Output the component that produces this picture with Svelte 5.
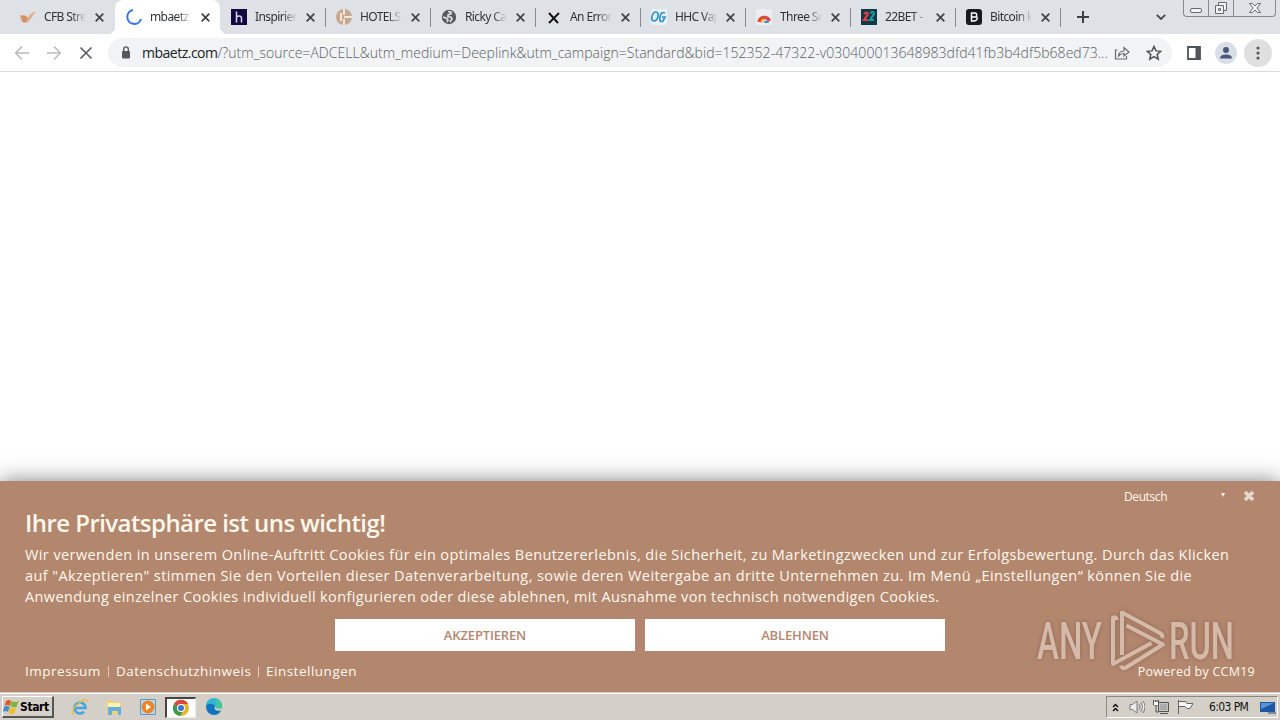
<script>
  let tabs = [
    { title: "CFB Stre", icon: "swoosh" },
    { title: "mbaetz |", icon: "spinner", active: true },
    { title: "Inspirieren", icon: "h" },
    { title: "HOTELSH", icon: "hotel" },
    { title: "Ricky Cas", icon: "globe" },
    { title: "An Error", icon: "cross" },
    { title: "HHC Vap", icon: "og" },
    { title: "Three Se", icon: "rainbow" },
    { title: "22BET - ", icon: "bet" },
    { title: "Bitcoin k", icon: "bitcoin" },
  ];

  let host = "mbaetz.com";
  let path = "/?utm_source=ADCELL&utm_medium=Deeplink&utm_campaign=Standard&bid=152352-47322-v030400013648983dfd41fb3b4df5b68ed73...";
</script>

<div class="screen">
  <div class="tabstrip">
    {#each tabs as tab, i}
      <div class="tab" class:active={tab.active} class:divided={i > 1}>
        <svg class="favicon" viewBox="0 0 16 16">
          {#if tab.icon == "swoosh"}
            <path d="M0 6h5l2 3Q10 4 16 2l-6 9q-2 3-6 3l-3-2z" fill="#e3b18f" />
            <path d="M1 7h5l2 3-2 3H3z" fill="#d58e62" />
          {:else if tab.icon == "spinner"}
            <path d="M7 1A7 7 0 1 0 15 10" fill="none" stroke="#3d73e0" stroke-width="2" />
          {:else if tab.icon == "h"}
            <rect width="16" height="16" fill="#120a3c" />
            <path d="M5.500 2.500v11M5.500 9q0-2 2.500-2t2.500 2v4.500" fill="none" stroke="#ddd5f5" stroke-width="1.500" />
          {:else if tab.icon == "hotel"}
            <circle cx="8" cy="8" r="8" fill="#c9a78a" />
            <path d="M8 0v6M8 10v6M8 8h8M5 4v8" fill="none" stroke="#eee7e2" stroke-width="2" />
          {:else if tab.icon == "globe"}
            <circle cx="8" cy="8" r="7.200" fill="#565b61" />
            <path d="M7 2.500q4 0 3 2L7 6v2h3l1 2-2 3M2 8l3 1 2 2-1 2" fill="none" stroke="#dee1e6" stroke-width="1.700" />
          {:else if tab.icon == "cross"}
            <path d="M3 4l9 10M13 4L3 14" stroke="#111" stroke-width="1.9" />
          {:else if tab.icon == "og"}
            <rect width="16" height="16" fill="#e8f1f8" />
            <path d="M5 3C1 3-1 12 3 12S9 3 5 3zM14 4q-4-2-5 4t3 4l2-4h-3" fill="none" stroke="#3294cf" stroke-width="1.7" />
          {:else if tab.icon == "rainbow"}
            <rect width="16" height="16" fill="#eceef1" />
            <path d="M3 13a5.500 5.500 0 0 1 10.500-1" fill="none" stroke="#dc4b3e" stroke-width="3.500" />
            <path d="M5.500 14a3 3 0 0 1 3-3" fill="none" stroke="#f1bd42" stroke-width="2" />
            <path d="M8 14a2.500 2.500 0 0 1 5 0z" fill="#4685dc" />
          {:else if tab.icon == "bet"}
            <rect width="16" height="16" fill="#123746" />
            <path d="M3 5q3-3 4 0L3 11h4" fill="none" stroke="#df3f47" stroke-width="2.200" />
            <path d="M9 4q4-2 4 1L9 11h4" fill="none" stroke="#1c9b9c" stroke-width="2.200" />
          {:else}
            <rect width="16" height="16" rx="3" fill="#16191d" />
            <path d="M5.500 4h3q3 0 2 3 2 4-2 5h-3zM6 8h4" fill="none" stroke="#fff" stroke-width="1.500" />
          {/if}
        </svg>
        <span class="title">{tab.title}</span>
        <svg class="close" viewBox="0 0 9 9"><path d="M.7.7l7.600 7.600M8.300.7L.7 8.300" /></svg>
      </div>
    {/each}
    <svg class="plus" viewBox="0 0 12 12"><path d="M6 0v12M0 6h12" /></svg>
    <svg class="chevron" viewBox="0 0 10 6"><path d="M.8.8L5 5 9.200.8" /></svg>
    <div class="controls">
      <span><svg viewBox="0 0 14 14"><rect x="1.500" y="7.500" width="11" height="4" rx="1.500" /></svg></span>
      <span><svg viewBox="0 0 14 14"><path d="M4.500 4.500v-3h8v8h-3M1.500 4.500h8v8h-8zM4.500 7.500h2v2h-2z" /></svg></span>
      <span class="wide"><svg viewBox="0 0 14 14"><path d="M1.500 2.500h3L7 5l2.500-2.500h3L9 7l3.500 4.500h-3L7 9l-2.500 2.500h-3L5 7z" /></svg></span>
    </div>
  </div>

  <div class="toolbar">
    <div class="nav">
      <svg class="dim" viewBox="0 0 16 16"><path d="M15 8H2M8 1.500L1.700 8 8 14.500" /></svg>
      <svg class="dim" viewBox="0 0 16 16"><path d="M1 8h13M8 1.500L14.300 8 8 14.500" /></svg>
      <svg viewBox="0 0 16 16"><path d="M2.500 2.500l11 11M13.500 2.500l-11 11" /></svg>
    </div>
    <div class="omnibox">
      <svg class="lock" viewBox="0 0 10 13">
        <rect x="1" y="5" width="8" height="7.500" rx="1" fill="#55595e" />
        <path d="M2.700 5V3.200a2.300 2.300 0 0 1 4.600 0V5" fill="none" stroke="#55595e" stroke-width="1.400" />
      </svg>
      <span class="url"><b>{host}</b>{path}</span>
      <svg class="share" viewBox="0 0 16 16"><path d="M3.500 5H1.500v9h11v-3M4.500 11q.5-5 5.500-5V2.500L15 7l-5 4V8.500Q7 8.300 4.500 11z" /></svg>
      <svg class="star" viewBox="0 0 16 16"><path d="M8 1.500l2 4.400 4.700.4-3.500 3.200 1 4.700L8 11.700l-4.200 2.500 1-4.700L1.300 6.300 6 5.900z" /></svg>
    </div>
    <svg class="panel" viewBox="0 0 14 14"><path d="M1 1h12v12H1z" fill="none" stroke="#50545a" stroke-width="1.800" /><path d="M8.500 1H13v12H8.500z" fill="#50545a" /></svg>
    <svg class="avatar" viewBox="0 0 22 22">
      <circle cx="11" cy="11" r="11" fill="#dadfe7" />
      <circle cx="11" cy="8" r="3" fill="#4c587b" />
      <path d="M5 16.500q0-4 6-4t6 4z" fill="#4c587b" />
    </svg>
    <svg class="menu" viewBox="0 0 28 28">
      <circle cx="14" cy="14" r="14" fill="#e0e0e0" />
      <g fill="#55585c"><circle cx="14" cy="9" r="1.600" /><circle cx="14" cy="14" r="1.600" /><circle cx="14" cy="19" r="1.600" /></g>
    </svg>
  </div>

  <div class="page"></div>

  <div class="banner">
    <svg class="watermark" viewBox="0 0 200 70">
      <text x="1" y="53" textLength="65" lengthAdjust="spacingAndGlyphs">ANY</text>
      <text x="133" y="53" textLength="65" lengthAdjust="spacingAndGlyphs">RUN</text>
      <path d="M81 14q-1-4-4-2v46l38.500-21" />
      <path d="M86 49V6.500L124 27q3 2 2 5M90.500 19.500L127 38.500 90 61.500q-4 2-5-2" />
    </svg>
    <div class="lang">
      <span>Deutsch</span>
      <i class="arrow"></i>
      <svg viewBox="0 0 12 12"><path d="M2 2l8 8M10 2l-8 8" /></svg>
    </div>
    <h1>Ihre Privatsphäre ist uns wichtig!</h1>
    <div class="text">
      <p>Wir verwenden in unserem Online-Auftritt Cookies für ein optimales Benutzererlebnis, die Sicherheit, zu Marketingzwecken und zur Erfolgsbewertung. Durch das Klicken</p>
      <p>auf "Akzeptieren" stimmen Sie den Vorteilen dieser Datenverarbeitung, sowie deren Weitergabe an dritte Unternehmen zu. Im Menü „Einstellungen“ können Sie die</p>
      <p class="last">Anwendung einzelner Cookies individuell konfigurieren oder diese ablehnen, mit Ausnahme von technisch notwendigen Cookies.</p>
    </div>
    <div class="buttons">
      <button>AKZEPTIEREN</button>
      <button>ABLEHNEN</button>
    </div>
    <div class="links">
      <span class="link imp">Impressum</span>
      <span class="link dat">Datenschutzhinweis</span>
      <span class="link">Einstellungen</span>
      <span class="powered">Powered by CCM19</span>
    </div>
  </div>

  <div class="taskbar">
    <div class="start">
      <svg viewBox="0 0 16 16">
        <path d="M3 2q3-2 5 0L7 7Q4 5 1.500 7z" fill="#e35b25" />
        <path d="M8.500 2q3 2 7 0l-2 6q-3 1-6-1z" fill="#79b83a" />
        <path d="M1 8q3-2 5.500 0L5 13q-3-2-5 0z" fill="#398ed8" />
        <path d="M7 8q3 2 6 1l-1.500 5q-3 2-6 0z" fill="#f3bb2d" />
      </svg>
      <span>Start</span>
    </div>
    <div class="quick">
      <svg viewBox="0 0 18 18">
        <path d="M4 10h10.500a5.500 5.500 0 1 0-1.500 3.800" fill="none" stroke="#45a7df" stroke-width="2.700" />
        <path d="M3 16.500Q-2 14 7 6t9-2" fill="none" stroke="#e5bf46" stroke-width="1.400" />
      </svg>
      <svg viewBox="0 0 18 18">
        <path d="M2 2h5l1 2h8v12H2z" fill="#efd27c" />
        <path d="M3 5h12v4H3z" fill="#fff1b6" />
        <path d="M3 17V9h13v8h-3v-4H7v4z" fill="#67add9" />
      </svg>
      <svg viewBox="0 0 18 18">
        <path d="M1.500 1.500h15v15h-15z" fill="#b9d8ed" stroke="#559aca" />
        <circle cx="9" cy="9" r="6.500" fill="#ee8525" /><path d="M7 5.500l5 3.500-5 3.500z" fill="#fff" />
      </svg>
      <div class="running">
        <svg viewBox="0 0 18 18">
          <circle cx="9" cy="9" r="8" fill="#e2b72e" />
          <path d="M9 9L2 5a8 8 0 0 1 14 0H9z" fill="#d9483b" />
          <path d="M9 9L2 5a8 8 0 0 0 6 12l3-5z" fill="#3b9a50" />
          <circle cx="9" cy="9" r="4" fill="#fff" /><circle cx="9" cy="9" r="3" fill="#3d77d3" />
        </svg>
      </div>
      <svg viewBox="0 0 18 18">
        <circle cx="9" cy="9" r="8" fill="#1474bf" />
        <path d="M1 8a8 8 0 0 1 16 0q0 4-5 4-3 0-2-3-1-4-5-3-3 0-4 2z" fill="#33b5d4" />
        <path d="M11 1.500q6 1 6 6.500 0 4-5 4-2-1-1-3z" fill="#43c69b" />
        <path d="M10 8.500q-2 5 6.500 4L17 10q-5 2-7-1.500z" fill="#d4d0c8" />
      </svg>
    </div>
    <div class="tray">
      <svg class="up" viewBox="0 0 7 9"><path d="M1 4l2.500-2.500L6 4M1 8l2.500-2.500L6 8" fill="none" stroke="#111" stroke-width="1.500" /></svg>
      <svg class="ti" viewBox="0 0 16 16"><path d="M1 5.500h2.500L8 2v12l-4.500-3.500H1zM10 5.500q2 2.500 0 5M12 3.500q3 4.500 0 9M14 2q4 6 0 12" fill="#eee" stroke="#777" /></svg>
      <svg class="ti" viewBox="0 0 16 16"><path d="M5.500 3.500h10v9h-10z" fill="#c4c4c4" stroke="#555" /><path d="M7 5h7v6H7z" fill="#aaa" /><path d="M7 14.500h8M.5 1v5h5V1M3 6v7h2.500M2.500 1v2M4 1v2" fill="none" stroke="#555" /><path d="M1 3h4v3H1z" fill="#fff" /></svg>
      <svg class="ti flag" viewBox="0 0 16 16"><path d="M1.500 1v14M2 2.500h7l1 2h6l-3 5h-3l-2-2H2" fill="#f5f5f5" stroke="#666" /></svg>
      <span class="clock">6:03 PM</span>
      <svg class="desk" viewBox="0 0 16 13"><path d="M0 1h15v10H0z" fill="#1d57a5" /><path d="M1 2h13L1 8z" fill="#5796d4" /><path d="M8 12h8" stroke="#234876" /></svg>
    </div>
  </div>
</div>

<style>
  :global(body) {
    margin: 0;
    overflow: hidden;
  }
  .screen {
    width: 1280px;
    height: 720px;
    display: flex;
    flex-direction: column;
    background: #fff;
    font-family: "Open Sans", sans-serif;
    overflow: hidden;
  }
  svg {
    display: block;
    flex: none;
  }

  .tabstrip {
    height: 34px;
    flex: none;
    display: flex;
    align-items: center;
    padding-left: 10px;
    background: #dee1e6;
  }
  .tab {
    width: 105px;
    height: 34px;
    box-sizing: border-box;
    display: flex;
    align-items: center;
    padding-left: 11px;
    position: relative;
  }
  .tab:first-child {
    padding-left: 10px;
  }
  .active {
    background: #fff;
    border-radius: 8px 8px 0 0;
  }
  .active::before,
  .active::after {
    content: "";
    position: absolute;
    bottom: 0;
    width: 7px;
    height: 7px;
  }
  .active::before {
    left: -7px;
    background: radial-gradient(circle at 0 0, transparent 7px, #fff 7px);
  }
  .active::after {
    right: -7px;
    background: radial-gradient(circle at 100% 0, transparent 7px, #fff 7px);
  }
  .divided::after {
    content: "";
    position: absolute;
    right: -1px;
    top: 8px;
    width: 1px;
    height: 19px;
    background: #868b93;
  }
  .favicon {
    width: 16px;
    height: 16px;
    margin-right: 8px;
  }
  .title {
    width: 42px;
    overflow: hidden;
    white-space: nowrap;
    font: 12px/18px "Noto Sans", sans-serif;
    letter-spacing: -0.6px;
    color: #303338;
    mask-image: linear-gradient(90deg, #000 65%, transparent);
  }
  .close {
    width: 9px;
    height: 9px;
    margin-left: 9px;
    fill: none;
    stroke: #43474c;
    stroke-width: 1.8;
  }
  .plus {
    width: 12px;
    height: 12px;
    margin-left: 17px;
    stroke: #3c4046;
    stroke-width: 2;
  }
  .chevron {
    width: 10px;
    height: 6px;
    margin-left: 67px;
    fill: none;
    stroke: #45494f;
    stroke-width: 1.8;
  }
  .controls {
    display: flex;
    align-self: flex-start;
    width: 91px;
    height: 16px;
    margin-left: 17px;
    border: 1px solid #858990;
    border-top: 0;
    border-radius: 0 0 4px 4px;
  }
  .controls span {
    width: 24px;
    display: flex;
    justify-content: center;
    border-right: 1px solid #858990;
  }
  .controls .wide {
    flex: 1;
    border: 0;
  }
  .controls svg {
    width: 14px;
    height: 14px;
    margin-top: 1px;
    fill: #f3f3f3;
    stroke: #666a70;
  }

  .toolbar {
    height: 37px;
    flex: none;
    display: flex;
    align-items: center;
    border-bottom: 1px solid #d9dbdd;
  }
  .nav {
    display: flex;
    gap: 16px;
    padding: 0 14px;
  }
  .nav svg {
    width: 16px;
    height: 16px;
    fill: none;
    stroke: #55595e;
    stroke-width: 1.6;
  }
  .nav .dim {
    stroke: #babcbe;
  }
  .omnibox {
    width: 1064px;
    height: 29px;
    border-radius: 15px;
    box-sizing: border-box;
    display: flex;
    align-items: center;
    padding-left: 13px;
    background: #f1f3f4;
  }
  .lock {
    width: 10px;
    height: 13px;
    margin-right: 11px;
  }
  .url {
    width: 972px;
    white-space: nowrap;
    font-size: 14px;
    font-weight: 300;
    letter-spacing: 0.03px;
    color: #5b6066;
  }
  .url b {
    font-weight: 400;
    letter-spacing: -0.5px;
    color: #202226;
  }
  .share,
  .star {
    width: 16px;
    height: 16px;
    fill: none;
    stroke: #666b70;
    stroke-width: 1.2;
  }
  .star {
    margin-left: 16px;
    stroke: #4f5358;
    stroke-width: 1.5;
  }
  .panel {
    width: 14px;
    height: 14px;
    margin-left: 15px;
  }
  .avatar {
    width: 22px;
    height: 22px;
    margin-left: 14px;
  }
  .menu {
    width: 28px;
    height: 28px;
    margin-left: 7px;
  }
  .page {
    flex: 1;
  }

  .banner {
    height: 211px;
    flex: none;
    box-sizing: border-box;
    padding: 8px 25px 0;
    position: relative;
    background: #b3866e;
    color: #fff8ed;
    box-shadow: 0 0 20px rgba(0, 0, 0, 0.5);
  }
  .lang {
    height: 14px;
    display: flex;
    align-items: center;
    justify-content: flex-end;
    font-size: 12px;
  }
  .lang span {
    width: 97px;
    letter-spacing: -0.4px;
  }
  .arrow {
    border: 2px solid transparent;
    border-top: 4px solid #fff3e7;
    border-bottom: 0;
    margin-top: -3px;
  }
  .lang svg {
    width: 12px;
    height: 12px;
    margin-left: 18px;
    stroke: #ead7cb;
    stroke-width: 3.5;
  }
  h1 {
    margin: 2px 0 0;
    font: 600 24px/36px "Open Sans", sans-serif;
    letter-spacing: -0.56px;
    white-space: nowrap;
  }
  .text {
    margin-top: 3px;
  }
  .text p {
    margin: 0;
    font-size: 14.5px;
    line-height: 21px;
    letter-spacing: 0.41px;
    white-space: nowrap;
  }
  .text .last {
    letter-spacing: 0.37px;
  }
  .buttons {
    display: flex;
    justify-content: center;
    gap: 10px;
    margin-top: 12px;
  }
  button {
    width: 300px;
    height: 32px;
    border: 0;
    padding: 0;
    background: #fff;
    color: #b3866e;
    font: 600 13px "Open Sans", sans-serif;
    letter-spacing: -0.15px;
  }
  .links {
    display: flex;
    align-items: center;
    height: 20px;
    margin-top: 10px;
    font-size: 13.5px;
    letter-spacing: 0.5px;
    white-space: nowrap;
  }
  .link + .link {
    display: flex;
    align-items: center;
  }
  .link + .link::before {
    content: "";
    height: 11px;
    border-left: 1px solid #e3c8b7;
    margin-right: 7px;
  }
  .imp {
    width: 83px;
  }
  .dat {
    width: 150px;
  }
  .powered {
    margin-left: auto;
    font-size: 12.5px;
    letter-spacing: 0.25px;
  }
  .watermark {
    position: absolute;
    left: 1036px;
    top: 125px;
    width: 200px;
    height: 70px;
    opacity: 0.55;
    filter: drop-shadow(0 0 2px rgba(70, 40, 25, 0.6));
  }
  .watermark text {
    fill: #f3e5da;
    font: 500 51px Roboto, sans-serif;
  }
  .watermark path {
    fill: none;
    stroke: #f3e5da;
    stroke-width: 4;
    stroke-linejoin: round;
  }

  .taskbar {
    height: 28px;
    flex: none;
    box-sizing: border-box;
    display: flex;
    align-items: center;
    padding: 2px 2px 0;
    position: relative;
    background: #d4d0c8;
    box-shadow: inset 0 1px #d4d0c8, inset 0 2px #fff;
  }
  .start {
    width: 52px;
    height: 22px;
    box-sizing: border-box;
    display: flex;
    align-items: center;
    border: 1px solid #fff;
    border-right: 2px solid #555;
    border-bottom: 2px solid #555;
    font: bold 12px "DejaVu Sans Condensed", "DejaVu Sans", sans-serif;
    letter-spacing: -0.4px;
    color: #000;
  }
  .start svg {
    width: 16px;
    height: 16px;
    margin-right: 1px;
  }
  .quick {
    display: flex;
    align-items: center;
    margin-left: 17px;
  }
  .quick svg {
    width: 18px;
    height: 18px;
  }
  .quick > svg {
    margin-right: 16px;
  }
  .quick > svg:nth-child(3) {
    margin-right: 8px;
  }
  .running {
    width: 31px;
    height: 21px;
    box-sizing: border-box;
    display: flex;
    align-items: center;
    justify-content: center;
    margin-right: 9px;
    background: #fff;
    border: 1px solid #eee;
    border-top: 2px solid #444;
    border-left: 2px solid #444;
  }
  .tray {
    width: 172px;
    height: 22px;
    box-sizing: border-box;
    margin-left: auto;
    display: flex;
    align-items: center;
    padding-left: 5px;
    border: 1px solid #fff;
    border-top-color: #8c8982;
    border-left-color: #8c8982;
  }
  .up {
    width: 7px;
    height: 9px;
    margin-right: 10px;
  }
  .ti {
    width: 16px;
    height: 16px;
    margin-right: 8px;
  }
  .flag {
    margin-right: 16px;
  }
  .clock {
    width: 51px;
    font: 12px "DejaVu Sans Condensed", "DejaVu Sans", sans-serif;
    letter-spacing: -0.6px;
    white-space: nowrap;
    color: #111;
  }
  .desk {
    width: 16px;
    height: 13px;
  }
</style>
